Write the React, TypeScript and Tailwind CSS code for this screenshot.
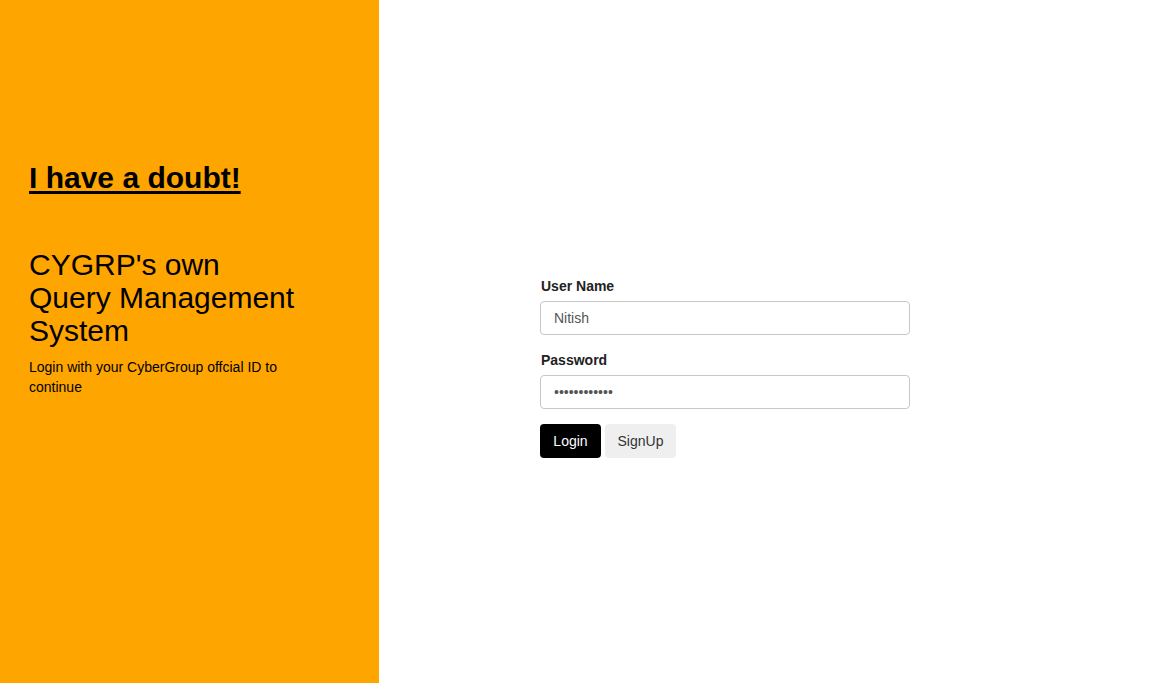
import React from "react";

export default function App() {
  return (
    <div className="flex h-[683px] w-full font-['Liberation_Sans',Arial,sans-serif] text-black">
      <div className="flex w-[379px] shrink-0 flex-col bg-[#ffa500] pl-[29px] pt-[158px]">
        <h1 className="text-[30px] font-bold leading-[40px] underline decoration-[3px] underline-offset-[3px]">
          I have a doubt!
        </h1>
        <h2 className="mt-[50px] w-[272px] text-[30px] leading-[33px]">
          CYGRP's own Query Management System
        </h2>
        <p className="mt-[10px] w-[272px] text-[14px] leading-[20px]">
          Login with your CyberGroup offcial ID to continue
        </p>
      </div>
      <div className="flex flex-1 flex-col bg-white pl-[161px] pt-[276px]">
        <div className="flex w-[370px] flex-col">
          <label className="pl-[1px] text-[14px] font-bold leading-[20px] text-[#222]">User Name</label>
          <input
            readOnly
            value="Nitish"
            className="mt-[5px] h-[34px] w-[370px] rounded-[4px] border border-[#c8c8c8] px-[13px] text-[14px] text-[#555] outline-none"
          />
          <label className="mt-[15px] pl-[1px] text-[14px] font-bold leading-[20px] text-[#222]">Password</label>
          <input
            readOnly
            type="password"
            value="nitish123456"
            className="mt-[5px] h-[34px] w-[370px] rounded-[4px] border border-[#c8c8c8] px-[13px] text-[14px] text-[#555] outline-none"
          />
          <div className="mt-[15px] flex gap-[4px]">
            <button className="h-[34px] w-[61px] rounded-[4px] bg-black text-[14px] text-white">Login</button>
            <button className="h-[34px] w-[71px] rounded-[4px] bg-[#efefef] text-[14px] text-[#333]">SignUp</button>
          </div>
        </div>
      </div>
    </div>
  );
}
